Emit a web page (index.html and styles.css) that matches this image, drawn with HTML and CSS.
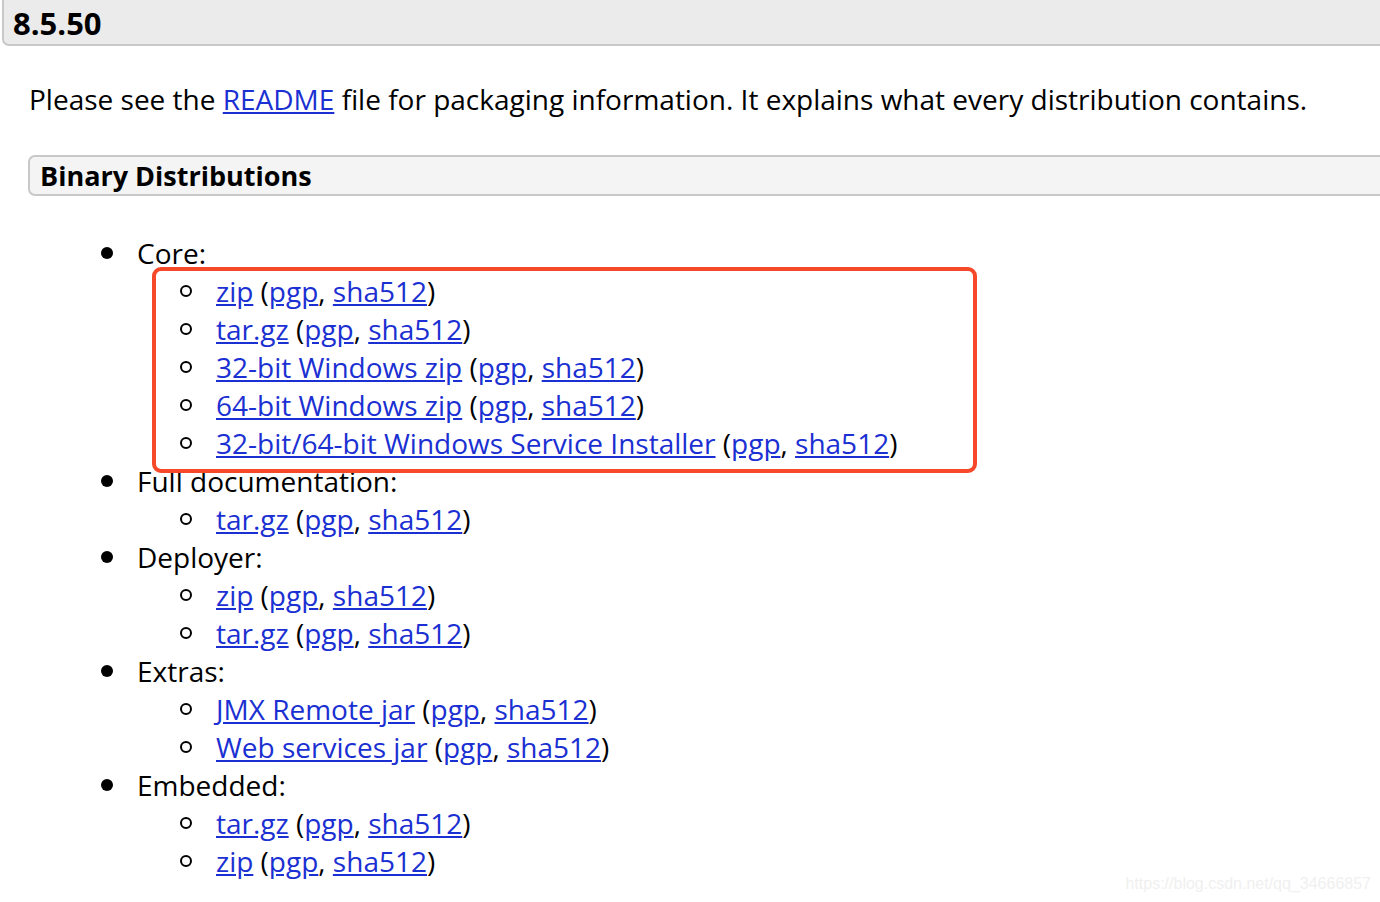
FILE: index.html
```html
<!DOCTYPE html>
<html lang="en">
<head>
  <meta charset="UTF-8" />
  <title>Tomcat 8.5.50</title>
  <link rel="stylesheet" href="styles.css">
</head>
<body>

  <h3 class="version-title">8.5.50</h3>

  <div class="version-body">
    <p class="intro">Please see the <a href="#">README</a> file for packaging information. It explains what every distribution contains.</p>

    <h4 class="dist-title">Binary Distributions</h4>

    <div class="dist-list-wrap">
      <ul class="dist-list">
        <li>Core:
          <ul>
            <li><a href="#">zip</a> (<a href="#">pgp</a>, <a href="#">sha512</a>)</li>
            <li><a href="#">tar.gz</a> (<a href="#">pgp</a>, <a href="#">sha512</a>)</li>
            <li><a href="#">32-bit Windows zip</a> (<a href="#">pgp</a>, <a href="#">sha512</a>)</li>
            <li><a href="#">64-bit Windows zip</a> (<a href="#">pgp</a>, <a href="#">sha512</a>)</li>
            <li><a href="#">32-bit/64-bit Windows Service Installer</a> (<a href="#">pgp</a>, <a href="#">sha512</a>)</li>
          </ul>
        </li>
        <li>Full documentation:
          <ul>
            <li><a href="#">tar.gz</a> (<a href="#">pgp</a>, <a href="#">sha512</a>)</li>
          </ul>
        </li>
        <li>Deployer:
          <ul>
            <li><a href="#">zip</a> (<a href="#">pgp</a>, <a href="#">sha512</a>)</li>
            <li><a href="#">tar.gz</a> (<a href="#">pgp</a>, <a href="#">sha512</a>)</li>
          </ul>
        </li>
        <li>Extras:
          <ul>
            <li><a href="#">JMX Remote jar</a> (<a href="#">pgp</a>, <a href="#">sha512</a>)</li>
            <li><a href="#">Web services jar</a> (<a href="#">pgp</a>, <a href="#">sha512</a>)</li>
          </ul>
        </li>
        <li>Embedded:
          <ul>
            <li><a href="#">tar.gz</a> (<a href="#">pgp</a>, <a href="#">sha512</a>)</li>
            <li><a href="#">zip</a> (<a href="#">pgp</a>, <a href="#">sha512</a>)</li>
          </ul>
        </li>
      </ul>
      <div class="highlight-box"></div>
    </div>
  </div>

  <div class="watermark">https://blog.csdn.net/qq_34666857</div>

</body>
</html>
```

FILE: styles.css
```css
html, body {
  overflow: hidden;
}

body {
  margin: 0;
  background: white;
  color: black;
  font-family: "Open Sans", "Liberation Sans", sans-serif;
  font-size: 28px;
  line-height: 38px;
}

a {
  color: #1b30d2;
  text-decoration: underline;
}

.version-title {
  margin: 0 -20px 0 2px;
  height: 46px;
  box-sizing: border-box;
  padding: 0 0 0 9px;
  background: #ebebeb;
  border: 2px solid #c8c8c8;
  border-top: none;
  border-radius: 0 0 7px 7px;
  font-size: 31px;
  font-weight: bold;
  line-height: 46px;
}

.version-body {
  padding-left: 28px;
}

.intro {
  margin: 34px 0 37px 1px;
}

.dist-title {
  margin: 0 -20px 0 0;
  height: 41px;
  box-sizing: border-box;
  padding: 0 0 0 10px;
  background: #f4f4f4;
  border: 2px solid #c8c8c8;
  border-radius: 7px;
  font-size: 27px;
  font-weight: bold;
  line-height: 38px;
}

.dist-list-wrap {
  position: relative;
  margin-top: 38px;
}

.dist-list,
.dist-list ul {
  margin: 0;
  list-style: none;
}

.dist-list {
  padding-left: 109px;
}

.dist-list ul {
  padding-left: 79px;
}

.dist-list li {
  position: relative;
}

.dist-list > li::before {
  content: "";
  position: absolute;
  left: -36px;
  top: 13px;
  width: 12px;
  height: 12px;
  border-radius: 50%;
  background: black;
}

.dist-list ul > li::before {
  content: "";
  position: absolute;
  left: -36px;
  top: 13px;
  width: 12px;
  height: 12px;
  box-sizing: border-box;
  border: 2.5px solid black;
  border-radius: 50%;
}

.highlight-box {
  position: absolute;
  left: 124px;
  top: 33px;
  width: 825px;
  height: 206px;
  box-sizing: border-box;
  border: 4px solid #f5492a;
  border-radius: 9px;
  pointer-events: none;
}

.watermark {
  position: absolute;
  right: 9px;
  bottom: 9px;
  font-family: "Liberation Sans", Arial, sans-serif;
  font-size: 16px;
  line-height: 18px;
  color: #f0f0f0;
}
```
